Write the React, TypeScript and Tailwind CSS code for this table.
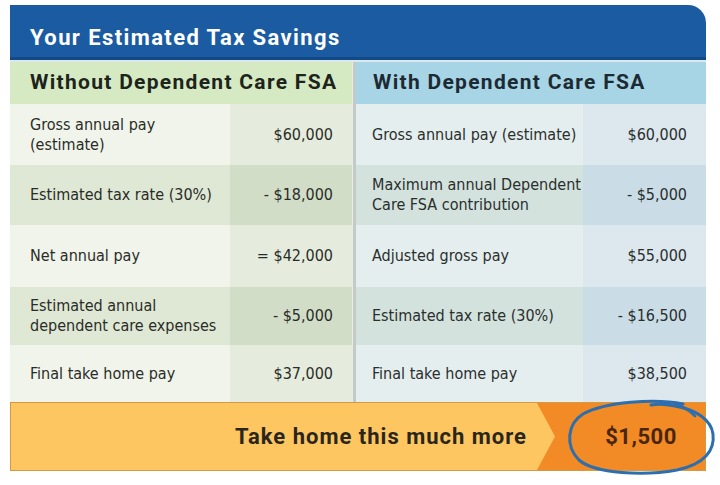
const rows = [
  {
    left: ['Gross annual pay', '(estimate)'],
    leftVal: '$60,000',
    right: ['Gross annual pay (estimate)'],
    rightVal: '$60,000',
    h: 'h-[61px]',
  },
  {
    left: ['Estimated tax rate (30%)'],
    leftVal: '- $18,000',
    right: ['Maximum annual Dependent', 'Care FSA contribution'],
    rightVal: '- $5,000',
    h: 'h-[60px]',
  },
  {
    left: ['Net annual pay'],
    leftVal: '= $42,000',
    right: ['Adjusted gross pay'],
    rightVal: '$55,000',
    h: 'h-[62px]',
  },
  {
    left: ['Estimated annual', 'dependent care expenses'],
    leftVal: '- $5,000',
    right: ['Estimated tax rate (30%)'],
    rightVal: '- $16,500',
    h: 'h-[58px]',
  },
  {
    left: ['Final take home pay'],
    leftVal: '$37,000',
    right: ['Final take home pay'],
    rightVal: '$38,500',
    h: 'h-[57px]',
  },
];

const narrow = "font-['DejaVu_Sans_Condensed','DejaVu_Sans',sans-serif] [font-stretch:condensed]";
const head = "font-['Roboto','Liberation_Sans',sans-serif]";

const App = () => {
  return (
    <div className="w-[720px] h-[485px] bg-white pl-[10px] pt-[5px]">
      <div className="w-[696px] flex flex-col">
        {/* title */}
        <div className="h-[55px] rounded-tr-[18px] bg-[#1a5ba2] border-b-[3px] border-[#124a88] flex items-center pl-[20px] pt-[12px]">
          <span className={`${head} text-white font-bold text-[22px] tracking-[1.4px]`}>Your Estimated Tax Savings</span>
        </div>
        <div className="h-[2px] bg-[#dbe9ef]" />

        <div className="flex">
          {/* left */}
          <div className="w-[342px] flex flex-col">
            <div className="h-[42px] bg-[#d5eac3] flex items-center pl-[20px]">
              <span className={`${head} font-bold text-[21px] tracking-[1.3px] text-[#1d241b]`}>Without Dependent Care FSA</span>
            </div>
            {rows.map((r, i) => (
              <div key={i} className={`flex ${r.h} ${narrow} font-medium text-[16px] text-[#2a2c28]`}>
                <div className={`w-[220px] flex flex-col justify-center pl-[20px] leading-[20px] ${i % 2 ? 'bg-[#dfe8d5]' : 'bg-[#f0f4ea]'}`}>
                  {r.left.map((t) => (
                    <span key={t}>{t}</span>
                  ))}
                </div>
                <div className={`flex-1 flex items-center justify-end pr-[19px] ${i % 2 ? 'bg-[#d1ddc6]' : 'bg-[#e6ecdd]'}`}>
                  {r.leftVal}
                </div>
              </div>
            ))}
          </div>

          {/* divider */}
          <div className="w-[4px] bg-[#c4cbc6] border-l border-[#e8ece8]" />

          {/* right */}
          <div className="w-[350px] flex flex-col">
            <div className="h-[42px] bg-[#a8d5e5] flex items-center pl-[17px]">
              <span className={`${head} font-bold text-[21px] tracking-[1.3px] text-[#1c2a33]`}>With Dependent Care FSA</span>
            </div>
            {rows.map((r, i) => (
              <div key={i} className={`flex ${r.h} ${narrow} font-medium text-[16px] text-[#2a2e2d]`}>
                <div className={`w-[227px] flex flex-col justify-center pl-[16px] leading-[20px] ${i % 2 ? 'bg-[#d3e2dd]' : 'bg-[#e5eeee]'}`}>
                  {r.right.map((t) => (
                    <span key={t}>{t}</span>
                  ))}
                </div>
                <div className={`flex-1 flex items-center justify-end pr-[19px] ${i % 2 ? 'bg-[#cadde6]' : 'bg-[#dde8ee]'}`}>
                  {r.rightVal}
                </div>
              </div>
            ))}
          </div>
        </div>

        {/* bottom bar */}
        <div className="relative h-[69px] flex border border-[#d39a45] bg-[#f28a26]">
          <div className="flex-1 bg-[#fec661] flex items-center justify-end pr-[10px]">
            <span className={`${head} font-bold text-[22px] tracking-[1px] text-[#2a261c]`}>Take home this much more</span>
          </div>
          <div className="w-[18px] bg-[#fec661] [clip-path:polygon(0_0,100%_50%,0_100%)]" />
          <div className="w-[150px] flex items-center justify-center pl-[22px]">
            <span className={`${head} font-bold text-[22px] tracking-[0.5px] text-[#4a2610]`}>$1,500</span>
          </div>
          <svg className="absolute left-[553px] -top-[3px] w-[154px] h-[76px] overflow-visible" viewBox="0 0 152 76" fill="none">
            <path
              d="M118 4 C 90 -2, 40 2, 18 14 C 2 24, 0 46, 14 60 C 30 74, 80 76, 112 70 C 140 64, 150 50, 148 34 C 146 20, 132 10, 110 6 C 100 4, 92 4, 86 5"
              stroke="#2d6fae"
              strokeWidth="3"
              strokeLinecap="round"
            />
            <path d="M110 4 C 118 6, 124 10, 130 16" stroke="#2d6fae" strokeWidth="2.5" strokeLinecap="round" />
          </svg>
        </div>
      </div>
    </div>
  );
};

export default App;
